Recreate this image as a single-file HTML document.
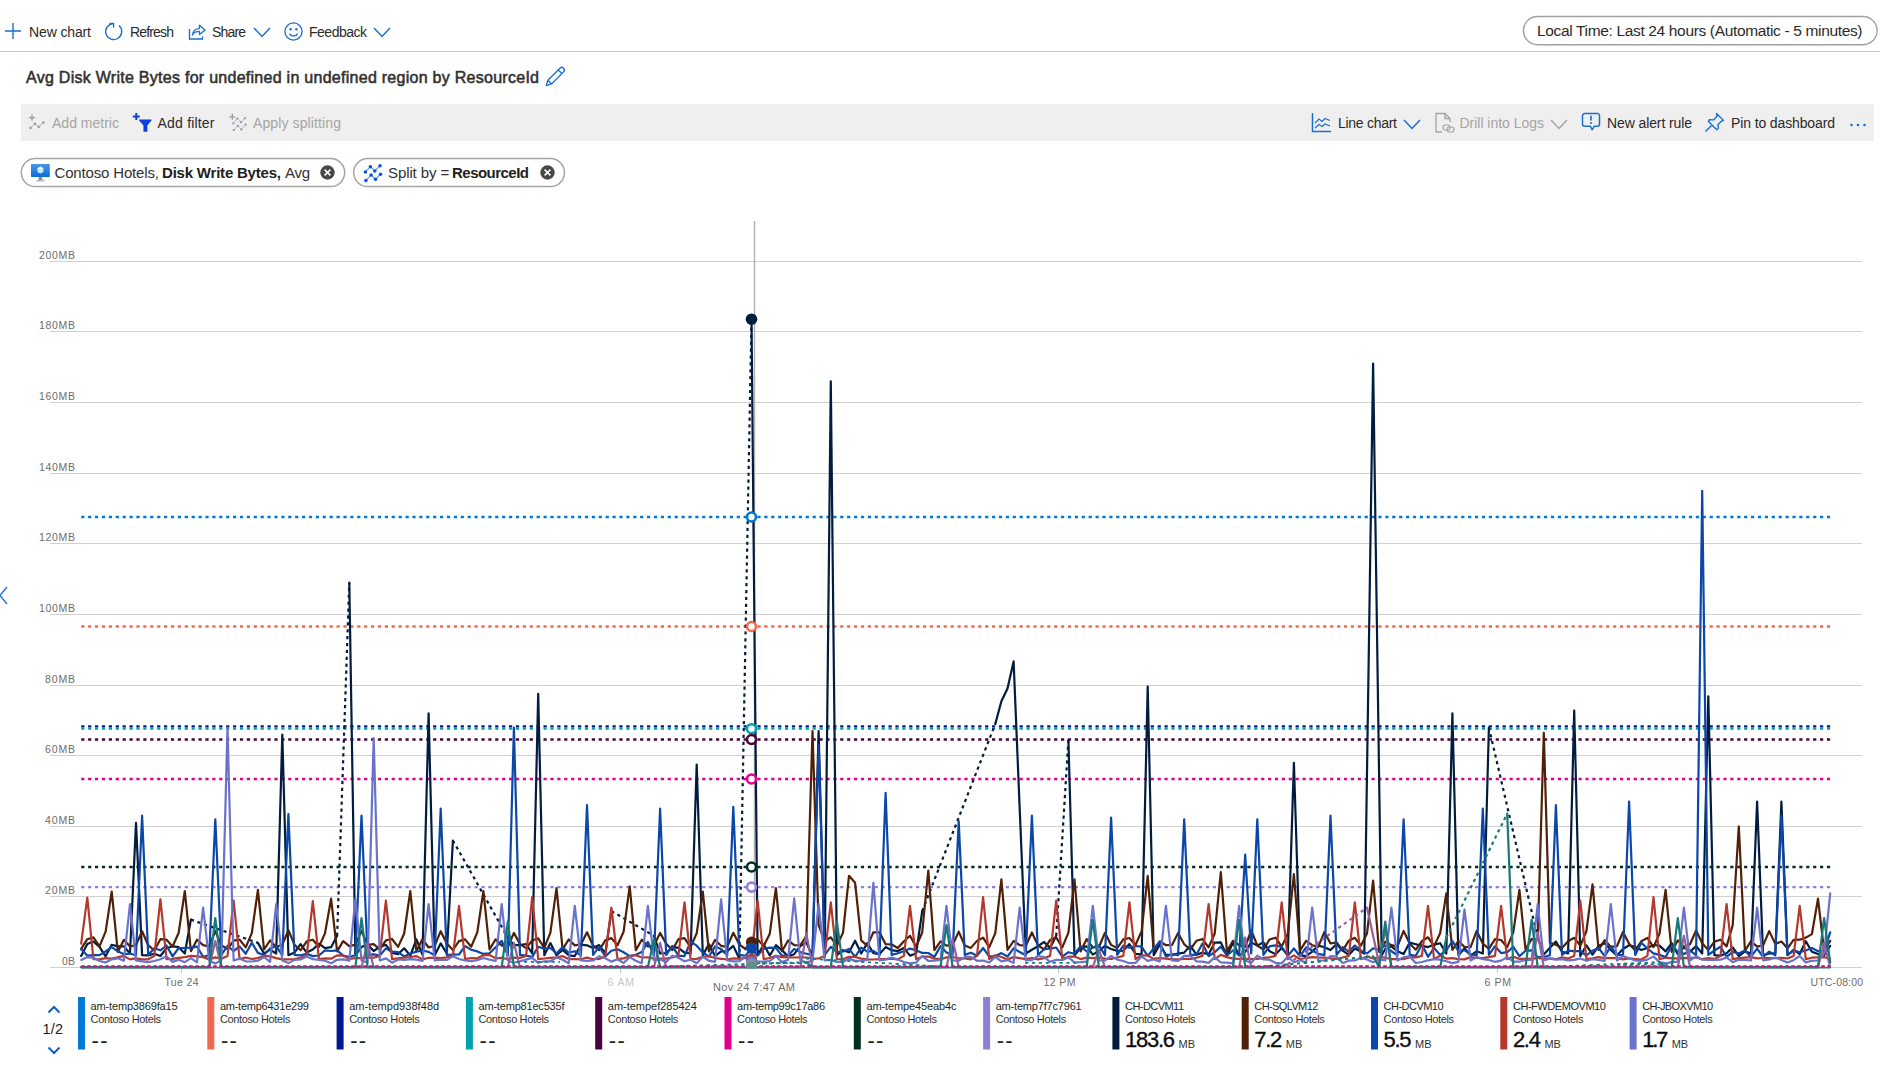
<!DOCTYPE html>
<html lang="en"><head><meta charset="utf-8"><title>Metrics</title>
<style>
html,body{margin:0;padding:0;background:#fff;}
body{width:1880px;height:1079px;position:relative;overflow:hidden;font-family:'Liberation Sans', sans-serif;}
.t{position:absolute;white-space:pre;}
.i{position:absolute;overflow:visible;}
.chart{position:absolute;left:0;top:0;}
.sep{position:absolute;left:0;top:51px;width:1880px;height:1px;background:#c8c6c4;}
.bar{position:absolute;left:21px;top:104px;width:1853px;height:36.5px;background:#efefef;}
.pill{position:absolute;box-sizing:border-box;border:1.3px solid #a3a19e;border-radius:15px;background:#fff;}
</style></head><body>
<div class="sep"></div>
<div class="bar"></div>
<svg class="chart" width="1880" height="200" viewBox="0 0 1880 200">
<rect x="1523.4" y="16.5" width="353.7" height="28.2" rx="14.1" fill="#fff" stroke="#a29fa0" stroke-width="1.4"/>
<rect x="21.3" y="158.6" width="323.4" height="28" rx="14" fill="#fff" stroke="#a6a4a1" stroke-width="1.5"/>
<rect x="353.7" y="158.6" width="210.8" height="28" rx="14" fill="#fff" stroke="#a6a4a1" stroke-width="1.5"/>
</svg>
<svg class="chart" width="1880" height="1079" viewBox="0 0 1880 1079">
<line x1="50" x2="1862" y1="967.5" y2="967.5" stroke="#d2d0ce" stroke-width="1"/>
<line x1="50" x2="1862" y1="896.5" y2="896.5" stroke="#d2d0ce" stroke-width="1"/>
<line x1="50" x2="1862" y1="826.5" y2="826.5" stroke="#d2d0ce" stroke-width="1"/>
<line x1="50" x2="1862" y1="755.5" y2="755.5" stroke="#d2d0ce" stroke-width="1"/>
<line x1="50" x2="1862" y1="685.5" y2="685.5" stroke="#d2d0ce" stroke-width="1"/>
<line x1="50" x2="1862" y1="614.5" y2="614.5" stroke="#d2d0ce" stroke-width="1"/>
<line x1="50" x2="1862" y1="543.5" y2="543.5" stroke="#d2d0ce" stroke-width="1"/>
<line x1="50" x2="1862" y1="473.5" y2="473.5" stroke="#d2d0ce" stroke-width="1"/>
<line x1="50" x2="1862" y1="402.5" y2="402.5" stroke="#d2d0ce" stroke-width="1"/>
<line x1="50" x2="1862" y1="331.5" y2="331.5" stroke="#d2d0ce" stroke-width="1"/>
<line x1="50" x2="1862" y1="261.5" y2="261.5" stroke="#d2d0ce" stroke-width="1"/>
<line x1="181.5" x2="181.5" y1="968" y2="973" stroke="#c8c6c4" stroke-width="1"/>
<line x1="620.5" x2="620.5" y1="968" y2="973" stroke="#c8c6c4" stroke-width="1"/>
<line x1="1058.5" x2="1058.5" y1="968" y2="973" stroke="#c8c6c4" stroke-width="1"/>
<line x1="1497.5" x2="1497.5" y1="968" y2="973" stroke="#c8c6c4" stroke-width="1"/>
<line x1="754.5" x2="754.5" y1="221" y2="968" stroke="#b3b0ad" stroke-width="1.4"/>
<path d="M81.2,517.0 L1830.2,517.0" stroke="#0078d4" stroke-width="2.3" stroke-dasharray="3.2 3.7" fill="none"/>
<path d="M81.2,626.5 L1830.2,626.5" stroke="#ef6950" stroke-width="2.3" stroke-dasharray="3.2 3.7" fill="none"/>
<path d="M81.2,726.4 L1830.2,726.4" stroke="#00188f" stroke-width="2.3" stroke-dasharray="3.2 3.7" fill="none"/>
<path d="M81.2,728.7 L1830.2,728.7" stroke="#00a2ad" stroke-width="2.3" stroke-dasharray="3.2 3.7" fill="none"/>
<path d="M81.2,739.5 L1830.2,739.5" stroke="#4b003f" stroke-width="2.3" stroke-dasharray="3.2 3.7" fill="none"/>
<path d="M81.2,779.0 L1830.2,779.0" stroke="#e3008c" stroke-width="2.3" stroke-dasharray="3.2 3.7" fill="none"/>
<path d="M81.2,867.0 L1830.2,867.0" stroke="#022f22" stroke-width="2.3" stroke-dasharray="3.2 3.7" fill="none"/>
<path d="M81.2,887.1 L1830.2,887.1" stroke="#917edb" stroke-width="2.3" stroke-dasharray="3.2 3.7" fill="none"/>
<path d="M81.2,955.9 L87.3,944.0 L93.4,941.5 L99.5,946.8 L105.6,956.3 L111.7,944.8 L117.8,946.4 L123.9,946.4 L130.0,953.5 L136.0,822.8 L142.1,955.2 L148.2,955.4 L154.3,953.8 L160.4,956.0 L166.5,948.3 L172.6,946.3 L178.7,947.2 L184.8,953.5 L190.9,919.6 M257.9,942.9 L264.0,953.5 L270.1,949.6 L276.2,953.5 L282.3,734.5 L288.4,955.2 L294.5,952.6 L300.6,944.2 L306.7,952.6 L312.8,949.5 L318.9,943.7 L325.0,948.2 L331.1,947.2 L337.1,935.8 M349.3,582.7 L355.4,955.2 L361.5,947.1 L367.6,944.6 L373.7,951.1 L379.8,946.7 L385.9,944.9 L392.0,952.9 L398.1,954.1 L404.2,948.3 L410.3,955.6 L416.4,939.4 L422.5,954.9 L428.6,713.3 L434.7,955.3 L440.7,943.4 L446.8,953.5 L452.9,840.5 M507.8,937.6 L513.9,945.2 L520.0,945.2 L526.1,944.0 L532.2,953.5 L538.2,693.9 L544.3,955.2 L550.4,943.1 L556.5,955.3 L562.6,949.9 L568.7,955.3 L574.8,956.1 L580.9,944.7 L587.0,945.3 L593.1,948.1 L599.2,945.1 L605.3,953.5 L611.4,911.1 M654.0,935.8 L660.1,953.5 L666.2,953.2 L672.3,946.8 L678.4,947.8 L684.5,952.7 L690.6,953.5 L696.7,764.5 L702.8,955.2 L708.9,944.1 L715.0,956.1 L721.1,951.4 L727.2,951.1 L733.3,945.9 L739.4,958.8 M751.5,319.2 L757.6,955.2 L763.7,944.5 L769.8,955.5 L775.9,945.2 L782.0,950.4 L788.1,956.3 L794.2,954.2 L800.3,946.1 L806.4,942.5 L812.5,956.3 L818.6,731.0 L824.7,957.0 L830.8,381.4 L836.9,955.2 L843.0,950.2 L849.0,952.3 L855.1,940.7 L861.2,953.5 L867.3,943.1 L873.4,953.2 L879.5,954.1 L885.6,947.1 L891.7,950.2 L897.8,951.1 L903.9,948.1 L910.0,955.6 L916.1,953.5 L922.2,911.1 M995.3,723.9 L1001.4,701.3 L1007.5,688.6 L1013.6,661.4 L1019.7,808.7 L1025.8,953.5 L1031.9,949.7 L1038.0,946.2 L1044.1,942.0 L1050.1,947.9 L1056.2,935.8 M1068.4,740.2 L1074.5,955.2 L1080.6,947.7 L1086.7,946.4 L1092.8,954.6 L1098.9,951.0 L1105.0,945.9 L1111.1,949.0 L1117.2,950.9 L1123.3,950.7 L1129.4,944.1 L1135.5,953.8 L1141.6,954.4 L1147.7,686.5 L1153.7,955.2 L1159.8,944.8 L1165.9,954.8 L1172.0,954.8 L1178.1,953.7 L1184.2,952.6 L1190.3,945.6 L1196.4,954.7 L1202.5,952.6 L1208.6,954.4 L1214.7,942.6 L1220.8,942.4 L1226.9,955.4 L1233.0,942.8 L1239.1,955.4 L1245.2,951.8 L1251.2,942.4 L1257.3,945.6 L1263.4,942.3 L1269.5,951.1 L1275.6,954.3 L1281.7,948.1 L1287.8,955.3 L1293.9,762.8 L1300.0,955.2 L1306.1,956.1 L1312.2,951.6 L1318.3,945.6 L1324.4,947.2 L1330.5,950.1 L1336.6,943.9 L1342.7,950.7 L1348.8,954.9 L1354.8,948.6 L1360.9,951.5 L1364.3,953.5 L1373.1,363.7 L1381.7,955.2 L1385.3,949.0 L1391.4,946.3 L1397.5,951.3 L1403.6,953.9 L1409.7,942.5 L1415.8,944.2 L1421.9,945.9 L1428.0,947.1 L1434.1,944.6 L1440.2,943.2 L1446.3,953.5 L1452.4,713.3 L1458.4,955.2 L1464.5,948.2 L1470.6,955.4 L1476.7,951.3 L1482.8,953.5 L1488.9,727.5 M1537.7,937.6 L1543.8,954.5 L1549.9,947.8 L1555.9,941.6 L1562.0,951.8 L1568.1,953.5 L1574.2,710.5 L1580.3,956.0 L1586.4,945.3 L1592.5,954.7 L1598.6,945.8 L1604.7,943.2 L1610.8,949.9 L1616.9,955.4 L1623.0,949.0 L1629.1,945.3 L1635.2,946.8 L1641.3,950.0 L1647.4,948.0 L1653.5,945.0 L1659.5,945.6 L1665.6,951.4 L1671.7,943.1 L1677.8,954.1 L1683.9,947.3 L1690.0,951.7 L1696.1,946.1 L1702.2,953.5 L1708.3,696.4 L1714.4,955.2 L1720.5,955.8 L1726.6,953.3 L1732.7,947.4 L1738.8,956.2 L1744.9,951.3 L1751.0,953.5 L1757.1,801.6 L1763.1,955.2 L1769.2,953.4 L1775.3,953.5 L1781.4,801.6 L1787.5,955.2 L1793.6,949.7 L1799.7,954.0 L1805.8,941.2 L1811.9,951.7 L1818.0,954.1 L1824.1,955.1 L1830.2,945.9" stroke="#001d3f" stroke-width="2.2" fill="none" stroke-linejoin="round" stroke-linecap="round"/>
<path d="M190.9,919.6 L257.9,942.9 M337.1,935.8 L349.3,582.7 M452.9,840.5 L507.8,937.6 M611.4,911.1 L654.0,935.8 M739.4,958.8 L751.5,319.2 M922.2,911.1 L995.3,723.9 M1056.2,935.8 L1068.4,740.2 M1488.9,727.5 L1537.7,937.6" stroke="#001d3f" stroke-width="2.2" stroke-dasharray="3.2 3.7" fill="none"/>
<path d="M81.2,948.9 L87.3,939.2 L93.4,937.4 L99.5,946.3 L105.6,931.7 L111.7,891.7 L117.8,951.9 L123.9,939.8 L130.0,946.5 L136.0,945.0 L142.1,931.2 L148.2,945.2 L154.3,950.5 L160.4,939.2 L166.5,939.7 L172.6,946.5 L178.7,932.7 L184.8,891.0 L190.9,951.2 L197.0,939.7 L203.1,945.1 L209.2,946.4 L215.3,931.1 L221.4,945.2 L227.5,949.1 L233.6,940.7 L239.6,939.6 L245.7,947.4 L251.8,933.1 L257.9,889.9 L264.0,949.5 L270.1,940.4 L276.2,947.2 L282.3,944.6 L288.4,930.2 L294.5,944.8 L300.6,950.3 L306.7,941.3 L312.8,939.8 L318.9,946.9 L325.0,933.4 L331.1,898.7 L337.1,951.4 L343.2,941.1 L349.3,946.2 L355.4,944.6 L361.5,930.9 L367.6,944.9 L373.7,944.2 L379.8,949.5 L385.9,940.3 L392.0,939.0 L398.1,946.9 L404.2,933.5 L410.3,891.0 L416.4,951.3 L422.5,939.1 L428.6,947.5 L434.7,945.7 L440.7,931.2 L446.8,943.6 L452.9,950.0 L459.0,941.1 L465.1,939.4 L471.2,946.7 L477.3,932.4 L483.4,891.0 L489.5,949.4 L495.6,939.4 L501.7,945.4 L507.8,947.1 L513.9,932.9 L520.0,944.1 L526.1,948.1 L532.2,940.5 L538.2,938.4 L544.3,947.8 L550.4,932.6 L556.5,888.1 L562.6,949.4 L568.7,939.5 L574.8,945.4 L580.9,944.4 L587.0,932.3 L593.1,945.7 L599.2,950.2 L605.3,940.3 L611.4,938.1 L617.5,945.2 L623.6,931.7 L629.7,886.4 L635.8,950.2 L641.8,939.7 L647.9,946.5 L654.0,945.6 L660.1,932.9 L666.2,943.8 L672.3,950.0 L678.4,939.2 L684.5,938.2 L690.6,947.0 L696.7,933.3 L702.8,891.7 L708.9,951.4 L715.0,940.0 L721.1,945.8 L727.2,946.8 L733.3,932.8 L739.4,944.6 L745.4,949.0 L751.5,940.7 L757.6,939.4 L763.7,946.1 L769.8,933.7 L775.9,888.1 L782.0,951.2 L788.1,940.5 L794.2,945.1 L800.3,945.3 L806.4,935.8 L812.5,731.0 L818.6,925.2 L824.7,941.1 L830.8,937.3 L836.9,945.8 L843.0,932.8 L849.0,875.8 L855.1,882.8 L861.2,940.4 L867.3,945.9 L873.4,932.3 L879.5,932.3 L885.6,944.2 L891.7,944.5 L897.8,948.0 L903.9,941.2 L910.0,935.8 L916.1,946.9 L922.2,932.5 L928.3,870.5 L934.4,950.1 L940.5,941.3 L946.5,945.6 L952.6,945.0 L958.7,931.6 L964.8,945.5 L970.9,947.9 L977.0,940.9 L983.1,937.7 L989.2,947.2 L995.3,933.1 L1001.4,879.3 L1007.5,949.9 L1013.6,941.0 L1019.7,945.1 L1025.8,945.7 L1031.9,932.5 L1038.0,945.4 L1044.1,949.5 L1050.1,939.9 L1056.2,937.4 L1062.3,947.4 L1068.4,932.6 L1074.5,879.3 L1080.6,951.5 L1086.7,939.1 L1092.8,947.4 L1098.9,947.0 L1105.0,932.8 L1111.1,944.9 L1117.2,948.1 L1123.3,939.3 L1129.4,938.0 L1135.5,945.0 L1141.6,931.1 L1147.7,875.8 L1153.7,951.1 L1159.8,941.3 L1165.9,945.2 L1172.0,945.0 L1178.1,932.9 L1184.2,944.2 L1190.3,949.6 L1196.4,940.8 L1202.5,939.1 L1208.6,947.3 L1214.7,933.7 L1220.8,872.2 L1226.9,951.3 L1233.0,940.8 L1239.1,945.1 L1245.2,946.8 L1251.2,930.3 L1257.3,945.5 L1263.4,949.6 L1269.5,939.5 L1275.6,937.7 L1281.7,946.6 L1287.8,933.6 L1293.9,874.0 L1300.0,950.7 L1306.1,940.8 L1312.2,945.2 L1318.3,946.6 L1324.4,932.0 L1330.5,943.5 L1336.6,942.3 L1342.7,950.6 L1348.8,940.7 L1354.8,937.8 L1360.9,945.7 L1367.0,933.6 L1373.1,880.7 L1379.2,952.0 L1385.3,941.6 L1391.4,945.2 L1397.5,946.4 L1403.6,930.9 L1409.7,943.5 L1415.8,949.7 L1421.9,941.1 L1428.0,937.3 L1434.1,946.1 L1440.2,933.0 L1446.3,893.4 L1452.4,950.0 L1458.4,940.9 L1464.5,947.0 L1470.6,947.1 L1476.7,930.9 L1482.8,943.5 L1488.9,948.9 L1495.0,939.2 L1501.1,940.0 L1507.2,947.2 L1513.3,932.4 L1519.4,889.9 L1525.5,949.4 L1531.6,939.1 L1537.7,939.3 L1543.8,732.8 L1549.9,942.9 L1555.9,944.7 L1562.0,948.0 L1568.1,941.3 L1574.2,937.8 L1580.3,945.7 L1586.4,931.4 L1592.5,884.3 L1598.6,949.9 L1604.7,940.1 L1610.8,946.9 L1616.9,946.2 L1623.0,932.0 L1629.1,943.8 L1635.2,950.4 L1641.3,941.3 L1647.4,937.9 L1653.5,947.1 L1659.5,933.5 L1665.6,889.9 L1671.7,952.0 L1677.8,940.3 L1683.9,946.9 L1690.0,944.3 L1696.1,930.5 L1702.2,943.3 L1708.3,949.9 L1714.4,941.6 L1720.5,939.8 L1726.6,946.4 L1732.7,925.2 L1738.8,826.3 L1744.9,950.8 L1751.0,941.2 L1757.1,946.6 L1763.1,945.4 L1769.2,931.1 L1775.3,943.9 L1781.4,941.5 L1787.5,948.3 L1793.6,939.9 L1799.7,939.7 L1805.8,937.6 L1811.9,934.1 L1818.0,898.7 L1824.1,950.5 L1830.2,940.8" stroke="#502006" stroke-width="2.2" fill="none" stroke-linejoin="round" stroke-linecap="round"/>
<path d="M81.2,949.2 L87.3,955.6 L93.4,955.1 L99.5,955.1 L105.6,951.4 L111.7,947.1 L117.8,951.3 L123.9,954.3 L130.0,953.5 L136.0,955.2 L142.1,815.7 L148.2,954.9 L154.3,948.2 L160.4,950.3 L166.5,945.5 L172.6,956.4 L178.7,948.0 L184.8,948.0 L190.9,947.7 L197.0,946.6 L203.1,956.8 L209.2,955.2 L215.3,819.3 L221.4,954.9 L227.5,945.8 L233.6,951.2 L239.6,946.4 L245.7,953.8 L251.8,942.7 L257.9,952.9 L264.0,955.0 L270.1,948.6 L276.2,946.2 L282.3,955.2 L288.4,814.0 L294.5,954.9 L300.6,955.4 L306.7,953.8 L312.8,956.1 L318.9,955.5 L325.0,950.4 L331.1,951.0 L337.1,950.3 L343.2,955.5 L349.3,957.0 L355.4,955.2 L361.5,815.7 L367.6,954.9 L373.7,954.4 L379.8,955.5 L385.9,948.4 L392.0,951.7 L398.1,952.1 L404.2,956.4 L410.3,953.5 L416.4,951.6 L422.5,950.5 L428.6,951.9 L434.7,955.2 L440.7,808.7 L446.8,954.9 L452.9,954.7 L459.0,954.5 L465.1,946.1 L471.2,949.8 L477.3,951.4 L483.4,953.9 L489.5,953.3 L495.6,947.4 L501.7,940.8 L507.8,955.2 L513.9,727.5 L520.0,954.9 L526.1,955.5 L532.2,957.0 L538.2,946.8 L544.3,948.6 L550.4,948.0 L556.5,953.4 L562.6,947.1 L568.7,952.7 L574.8,951.3 L580.9,955.2 L587.0,805.2 L593.1,954.9 L599.2,946.7 L605.3,956.5 L611.4,950.7 L617.5,949.2 L623.6,952.2 L629.7,956.1 L635.8,954.7 L641.8,952.0 L647.9,941.9 L654.0,955.2 L660.1,808.7 L666.2,954.9 L672.3,945.9 L678.4,955.6 L684.5,956.2 L690.6,941.6 L696.7,945.7 L702.8,952.5 L708.9,956.7 L715.0,946.5 L721.1,949.0 L727.2,955.2 L733.3,806.9 L739.4,954.9 L745.4,955.9 L751.5,948.5 L757.6,955.4 L763.7,948.8 L769.8,947.6 L775.9,947.9 L782.0,955.7 L788.1,955.4 L794.2,948.9 L800.3,952.1 L806.4,953.7 L812.5,955.2 L818.6,745.1 L824.7,954.9 L830.8,946.9 L836.9,952.2 L843.0,951.5 L849.0,948.9 L855.1,956.8 L861.2,947.7 L867.3,951.7 L873.4,951.0 L879.5,955.2 L885.6,792.8 L891.7,954.9 L897.8,953.2 L903.9,951.2 L910.0,948.6 L916.1,950.2 L922.2,952.9 L928.3,953.0 L934.4,956.9 L940.5,946.2 L946.5,952.4 L952.6,955.2 L958.7,821.0 L964.8,954.9 L970.9,952.8 L977.0,955.8 L983.1,948.0 L989.2,956.4 L995.3,956.2 L1001.4,953.1 L1007.5,956.5 L1013.6,948.4 L1019.7,952.1 L1025.8,955.2 L1031.9,815.7 L1038.0,954.9 L1044.1,949.2 L1050.1,948.6 L1056.2,947.5 L1062.3,956.7 L1068.4,952.2 L1074.5,953.7 L1080.6,946.1 L1086.7,951.5 L1092.8,947.5 L1098.9,945.4 L1105.0,955.2 L1111.1,817.5 L1117.2,954.9 L1123.3,945.6 L1129.4,947.8 L1135.5,946.0 L1141.6,946.6 L1147.7,955.9 L1153.7,948.5 L1159.8,941.8 L1165.9,956.7 L1172.0,954.0 L1178.1,955.2 L1184.2,819.3 L1190.3,954.9 L1196.4,954.8 L1202.5,943.5 L1208.6,956.1 L1214.7,952.2 L1220.8,946.6 L1226.9,955.5 L1233.0,950.4 L1239.1,955.2 L1245.2,854.6 L1251.2,953.5 L1257.3,819.3 L1263.4,954.9 L1269.5,946.3 L1275.6,945.4 L1281.7,946.9 L1287.8,955.9 L1293.9,948.5 L1300.0,956.3 L1306.1,947.3 L1312.2,950.5 L1318.3,953.9 L1324.4,955.2 L1330.5,815.7 L1336.6,954.9 L1342.7,947.1 L1348.8,951.8 L1354.8,945.5 L1360.9,950.6 L1367.0,953.5 L1373.1,948.3 L1379.2,950.3 L1385.3,945.5 L1391.4,951.3 L1397.5,955.2 L1403.6,819.3 L1409.7,954.9 L1415.8,955.8 L1421.9,944.5 L1428.0,956.8 L1434.1,948.0 L1440.2,955.0 L1446.3,950.5 L1452.4,941.0 L1458.4,951.2 L1464.5,950.2 L1470.6,954.4 L1476.7,955.2 L1482.8,808.7 L1488.9,954.9 L1495.0,946.2 L1501.1,953.1 L1507.2,952.1 L1513.3,946.9 L1519.4,956.2 L1525.5,950.7 L1531.6,950.3 L1537.7,956.9 L1543.8,957.0 L1549.9,955.2 L1555.9,805.2 L1562.0,954.9 L1568.1,950.7 L1574.2,951.2 L1580.3,951.1 L1586.4,955.5 L1592.5,950.7 L1598.6,948.0 L1604.7,956.1 L1610.8,946.3 L1616.9,955.1 L1623.0,955.2 L1629.1,801.6 L1635.2,954.9 L1641.3,942.7 L1647.4,948.5 L1653.5,953.4 L1659.5,954.9 L1665.6,957.0 L1671.7,945.8 L1677.8,951.5 L1683.9,954.0 L1690.0,950.4 L1696.1,955.2 L1702.2,490.8 L1708.3,954.9 L1714.4,950.5 L1720.5,946.8 L1726.6,956.8 L1732.7,951.9 L1738.8,953.4 L1744.9,950.6 L1751.0,956.7 L1757.1,948.6 L1763.1,957.0 L1769.2,951.6 L1775.3,955.2 L1781.4,815.7 L1787.5,954.9 L1793.6,950.9 L1799.7,952.2 L1805.8,950.5 L1811.9,948.1 L1818.0,951.2 L1824.1,951.7 L1830.2,932.3" stroke="#0b47a8" stroke-width="2.2" fill="none" stroke-linejoin="round" stroke-linecap="round"/>
<path d="M81.2,943.6 L87.3,897.7 L93.4,959.1 L99.5,959.3 L105.6,958.2 L111.7,958.6 L117.8,957.2 L123.9,956.1 L130.0,959.4 L136.0,958.4 L142.1,959.3 L148.2,959.3 L154.3,955.9 L160.4,899.4 L166.5,959.1 L172.6,958.9 L178.7,957.9 L184.8,957.1 L190.9,955.9 L197.0,956.4 L203.1,957.1 L209.2,959.4 L215.3,957.4 L221.4,958.8 L227.5,955.9 L233.6,900.5 L239.6,959.1 L245.7,957.5 L251.8,959.0 L257.9,958.0 L264.0,955.8 L270.1,956.4 L276.2,958.1 L282.3,959.3 L288.4,959.3 L294.5,959.0 L300.6,957.8 L306.7,955.9 L312.8,901.2 L318.9,959.1 L325.0,958.4 L331.1,958.7 L337.1,955.4 L343.2,955.6 L349.3,958.9 L355.4,958.1 L361.5,958.2 L367.6,957.3 L373.7,957.7 L379.8,955.9 L385.9,900.5 L392.0,959.1 L398.1,958.4 L404.2,957.6 L410.3,957.0 L416.4,956.1 L422.5,959.4 L428.6,957.8 L434.7,957.6 L440.7,958.1 L446.8,957.3 L452.9,955.9 L459.0,905.8 L465.1,959.1 L471.2,958.0 L477.3,958.3 L483.4,955.3 L489.5,955.0 L495.6,958.3 L501.7,957.8 L507.8,959.3 L513.9,957.7 L520.0,957.9 L526.1,955.9 L532.2,897.0 L538.2,959.1 L544.3,958.5 L550.4,957.8 L556.5,957.3 L562.6,956.2 L568.7,959.1 L574.8,959.2 L580.9,959.3 L587.0,957.6 L593.1,959.2 L599.2,958.9 L605.3,955.9 L611.4,907.6 L617.5,959.1 L623.6,958.4 L629.7,956.0 L635.8,955.2 L641.8,957.5 L647.9,957.3 L654.0,958.8 L660.1,958.5 L666.2,958.6 L672.3,957.3 L678.4,955.9 L684.5,902.3 L690.6,959.1 L696.7,958.9 L702.8,956.8 L708.9,956.2 L715.0,958.0 L721.1,958.8 L727.2,959.5 L733.3,958.4 L739.4,958.6 L745.4,958.1 L751.5,955.9 L757.6,900.5 L763.7,959.1 L769.8,958.0 L775.9,955.7 L782.0,957.2 L788.1,957.3 L794.2,957.5 L800.3,957.3 L806.4,957.5 L812.5,958.5 L818.6,958.5 L824.7,955.9 L830.8,902.3 L836.9,959.1 L843.0,959.3 L849.0,956.8 L855.1,957.0 L861.2,958.6 L867.3,959.3 L873.4,959.5 L879.5,959.1 L885.6,959.2 L891.7,958.6 L897.8,959.4 L903.9,955.9 L910.0,905.8 L916.1,959.1 L922.2,956.7 L928.3,956.5 L934.4,958.6 L940.5,959.2 L946.5,957.4 L952.6,957.0 L958.7,958.3 L964.8,958.3 L970.9,959.3 L977.0,955.9 L983.1,897.0 L989.2,959.1 L995.3,955.3 L1001.4,957.0 L1007.5,959.4 L1013.6,957.1 L1019.7,958.2 L1025.8,959.1 L1031.9,958.1 L1038.0,959.4 L1044.1,958.2 L1050.1,955.9 L1056.2,900.5 L1062.3,959.1 L1068.4,956.7 L1074.5,956.5 L1080.6,959.1 L1086.7,957.6 L1092.8,958.2 L1098.9,957.6 L1105.0,958.7 L1111.1,958.9 L1117.2,957.5 L1123.3,955.9 L1129.4,902.3 L1135.5,959.1 L1141.6,955.3 L1147.7,955.5 L1153.7,958.9 L1159.8,958.2 L1165.9,958.6 L1172.0,959.4 L1178.1,959.4 L1184.2,958.8 L1190.3,958.8 L1196.4,957.8 L1202.5,955.9 L1208.6,904.0 L1214.7,959.1 L1220.8,954.9 L1226.9,957.1 L1233.0,958.6 L1239.1,958.9 L1245.2,958.9 L1251.2,959.0 L1257.3,959.0 L1263.4,957.9 L1269.5,957.3 L1275.6,955.9 L1281.7,902.3 L1287.8,959.1 L1293.9,955.4 L1300.0,959.3 L1306.1,957.8 L1312.2,957.2 L1318.3,957.5 L1324.4,957.6 L1330.5,958.3 L1336.6,959.0 L1342.7,957.5 L1348.8,955.9 L1354.8,902.3 L1360.9,959.1 L1367.0,956.4 L1373.1,958.5 L1379.2,957.1 L1385.3,957.7 L1391.4,959.1 L1397.5,959.2 L1403.6,959.1 L1409.7,957.2 L1415.8,957.5 L1421.9,955.9 L1428.0,905.8 L1434.1,959.1 L1440.2,955.7 L1446.3,958.6 L1452.4,958.1 L1458.4,959.2 L1464.5,959.4 L1470.6,957.1 L1476.7,957.9 L1482.8,958.2 L1488.9,957.2 L1495.0,955.9 L1501.1,905.8 L1507.2,959.1 L1513.3,956.8 L1519.4,958.9 L1525.5,958.8 L1531.6,958.9 L1537.7,958.0 L1543.8,958.8 L1549.9,958.4 L1555.9,959.2 L1562.0,957.2 L1568.1,958.6 L1574.2,955.9 L1580.3,900.5 L1586.4,959.1 L1592.5,958.4 L1598.6,957.2 L1604.7,958.2 L1610.8,958.2 L1616.9,958.2 L1623.0,959.4 L1629.1,958.4 L1635.2,959.0 L1641.3,959.5 L1647.4,955.9 L1653.5,897.0 L1659.5,959.1 L1665.6,957.7 L1671.7,958.1 L1677.8,958.7 L1683.9,958.2 L1690.0,958.1 L1696.1,957.5 L1702.2,959.2 L1708.3,958.1 L1714.4,958.9 L1720.5,955.9 L1726.6,904.0 L1732.7,959.1 L1738.8,958.1 L1744.9,957.6 L1751.0,957.2 L1757.1,958.4 L1763.1,958.0 L1769.2,958.2 L1775.3,958.2 L1781.4,957.8 L1787.5,958.4 L1793.6,955.9 L1799.7,905.8 L1805.8,959.1 L1811.9,957.7 L1818.0,957.3 L1824.1,957.1 L1830.2,958.8" stroke="#b4382c" stroke-width="2.2" fill="none" stroke-linejoin="round" stroke-linecap="round"/>
<path d="M81.2,959.9 L87.3,957.1 L93.4,957.8 L99.5,961.0 L105.6,962.4 L111.7,959.3 L117.8,958.3 L123.9,960.7 L130.0,904.0 L136.0,960.5 L142.1,961.4 L148.2,962.1 L154.3,961.0 L160.4,959.3 L166.5,956.3 L172.6,961.9 L178.7,959.8 L184.8,962.2 L190.9,958.2 L197.0,962.3 L203.1,907.6 L209.2,960.5 L215.3,963.4 L221.4,960.3 L227.5,727.5 L233.6,960.5 L239.6,958.6 L245.7,961.3 L251.8,961.5 L257.9,960.7 L264.0,957.0 L270.1,961.8 L276.2,904.0 L282.3,960.5 L288.4,963.1 L294.5,959.9 L300.6,959.5 L306.7,956.5 L312.8,959.2 L318.9,959.8 L325.0,960.7 L331.1,963.3 L337.1,959.8 L343.2,959.3 L349.3,960.6 L355.4,898.7 L361.5,960.5 L367.6,962.8 L373.7,738.1 L379.8,960.5 L385.9,958.4 L392.0,962.7 L398.1,959.5 L404.2,960.0 L410.3,959.1 L416.4,959.6 L422.5,960.8 L428.6,904.0 L434.7,960.5 L440.7,959.6 L446.8,960.0 L452.9,956.3 L459.0,959.0 L465.1,960.4 L471.2,961.1 L477.3,960.2 L483.4,958.0 L489.5,959.6 L495.6,961.0 L501.7,904.0 L507.8,960.5 L513.9,962.8 L520.0,961.3 L526.1,959.6 L532.2,957.9 L538.2,962.8 L544.3,961.3 L550.4,961.3 L556.5,957.5 L562.6,959.7 L568.7,963.3 L574.8,905.8 L580.9,960.5 L587.0,961.0 L593.1,960.5 L599.2,956.3 L605.3,958.2 L611.4,961.6 L617.5,959.3 L623.6,963.0 L629.7,957.1 L635.8,960.7 L641.8,963.2 L647.9,905.8 L654.0,960.5 L660.1,959.4 L666.2,962.0 L672.3,955.7 L678.4,957.7 L684.5,961.3 L690.6,959.6 L696.7,963.2 L702.8,956.8 L708.9,960.7 L715.0,961.9 L721.1,899.4 L727.2,960.5 L733.3,961.4 L739.4,961.1 L745.4,956.6 L751.5,958.9 L757.6,961.5 L763.7,961.6 L769.8,961.0 L775.9,956.3 L782.0,962.1 L788.1,959.9 L794.2,898.4 L800.3,960.5 L806.4,962.2 L812.5,961.2 L818.6,904.0 L824.7,960.5 L830.8,960.0 L836.9,962.0 L843.0,962.0 L849.0,958.6 L855.1,960.9 L861.2,960.7 L867.3,960.0 L873.4,882.8 L879.5,960.5 L885.6,959.6 L891.7,957.5 L897.8,959.6 L903.9,962.1 L910.0,963.3 L916.1,962.6 L922.2,955.9 L928.3,960.8 L934.4,960.6 L940.5,960.0 L946.5,905.8 L952.6,960.5 L958.7,960.7 L964.8,957.2 L970.9,956.9 L977.0,960.8 L983.1,960.5 L989.2,962.5 L995.3,957.0 L1001.4,961.4 L1007.5,960.1 L1013.6,962.9 L1019.7,907.6 L1025.8,960.5 L1031.9,960.1 L1038.0,956.0 L1044.1,957.1 L1050.1,961.8 L1056.2,959.9 L1062.3,960.0 L1068.4,957.4 L1074.5,962.3 L1080.6,962.1 L1086.7,961.6 L1092.8,905.8 L1098.9,960.5 L1105.0,960.6 L1111.1,955.9 L1117.2,959.6 L1123.3,961.0 L1129.4,963.2 L1135.5,962.9 L1141.6,956.4 L1147.7,960.9 L1153.7,959.5 L1159.8,961.5 L1165.9,905.8 L1172.0,960.5 L1178.1,960.9 L1184.2,955.9 L1190.3,955.7 L1196.4,961.3 L1202.5,961.6 L1208.6,962.9 L1214.7,957.1 L1220.8,962.5 L1226.9,962.7 L1233.0,963.3 L1239.1,905.8 L1245.2,960.5 L1251.2,962.8 L1257.3,955.7 L1263.4,959.5 L1269.5,959.7 L1275.6,962.8 L1281.7,963.3 L1287.8,956.8 L1293.9,962.3 L1300.0,960.3 L1306.1,962.6 L1312.2,907.6 L1318.3,960.5 L1324.4,960.3 L1330.5,956.2 L1336.6,956.7 L1342.7,963.0 L1348.8,960.7 L1354.8,960.4 L1360.9,957.9 L1367.0,959.4 L1373.1,962.3 L1379.2,959.3 L1385.3,960.3 L1391.4,907.6 L1397.5,960.5 L1403.6,957.1 L1409.7,956.4 L1415.8,963.0 L1421.9,962.0 L1428.0,960.3 L1434.1,959.1 L1440.2,959.7 L1446.3,961.3 L1452.4,963.1 L1458.4,961.8 L1464.5,909.3 L1470.6,960.5 L1476.7,957.0 L1482.8,959.2 L1488.9,960.0 L1495.0,961.8 L1501.1,960.6 L1507.2,957.2 L1513.3,961.6 L1519.4,961.7 L1525.5,960.0 L1531.6,959.8 L1537.7,904.0 L1543.8,960.5 L1549.9,958.6 L1555.9,959.6 L1562.0,959.2 L1568.1,960.4 L1574.2,959.9 L1580.3,958.4 L1586.4,960.8 L1592.5,959.2 L1598.6,959.8 L1604.7,960.8 L1610.8,904.0 L1616.9,960.5 L1623.0,956.1 L1629.1,958.2 L1635.2,960.5 L1641.3,960.8 L1647.4,959.6 L1653.5,956.4 L1659.5,962.2 L1665.6,963.4 L1671.7,962.2 L1677.8,961.6 L1683.9,907.6 L1690.0,960.5 L1696.1,956.1 L1702.2,959.7 L1708.3,959.8 L1714.4,959.9 L1720.5,959.7 L1726.6,957.4 L1732.7,962.2 L1738.8,959.8 L1744.9,959.9 L1751.0,960.5 L1757.1,907.6 L1763.1,960.5 L1769.2,959.5 L1775.3,957.5 L1781.4,960.0 L1787.5,962.5 L1793.6,960.2 L1799.7,955.9 L1805.8,962.4 L1811.9,960.8 L1818.0,960.5 L1824.1,953.5 L1830.2,893.4" stroke="#6a72cc" stroke-width="2.2" fill="none" stroke-linejoin="round" stroke-linecap="round"/>
<path d="M81.2,967.2 L87.3,967.2 L93.4,967.2 L99.5,967.2 L105.6,967.2 L111.7,967.2 L117.8,967.2 L123.9,967.2 L130.0,967.2 L136.0,967.2 L142.1,967.2 L148.2,967.2 L154.3,967.2 L160.4,967.2 L166.5,967.2 L172.6,967.2 L178.7,967.2 L184.8,967.2 L190.9,967.2 L197.0,967.2 L203.1,967.2 L209.2,967.2 L215.3,941.1 L221.4,967.2 L227.5,967.2 L233.6,967.2 L239.6,967.2 L245.7,967.2 L251.8,967.2 L257.9,967.2 L264.0,967.2 L270.1,967.2 L276.2,967.2 L282.3,967.2 L288.4,967.2 L294.5,967.2 L300.6,967.2 L306.7,967.2 L312.8,967.2 L318.9,967.2 L325.0,967.2 L331.1,967.2 L337.1,967.2 L343.2,967.2 L349.3,967.2 L355.4,967.2 L361.5,967.2 L367.6,942.9 L373.7,967.2 L379.8,967.2 L385.9,967.2 L392.0,967.2 L398.1,967.2 L404.2,967.2 L410.3,967.2 L416.4,967.2 L422.5,967.2 L428.6,967.2 L434.7,967.2 L440.7,967.2 L446.8,967.2 L452.9,967.2 L459.0,967.2 L465.1,967.2 L471.2,967.2 L477.3,967.2 L483.4,967.2 L489.5,967.2 L495.6,967.2 L501.7,967.2 L507.8,967.2 L513.9,942.9 L520.0,967.2 L526.1,967.2 L532.2,967.2 L538.2,967.2 L544.3,967.2 L550.4,967.2 L556.5,967.2 L562.6,967.2 L568.7,967.2 L574.8,967.2 L580.9,967.2 L587.0,967.2 L593.1,967.2 L599.2,967.2 L605.3,967.2 L611.4,967.2 L617.5,967.2 L623.6,967.2 L629.7,967.2 L635.8,967.2 L641.8,967.2 L647.9,967.2 L654.0,967.2 L660.1,942.9 L666.2,967.2 L672.3,967.2 L678.4,967.2 L684.5,967.2 L690.6,967.2 L696.7,967.2 L702.8,967.2 L708.9,967.2 L715.0,967.2 L721.1,967.2 L727.2,967.2 L733.3,967.2 L739.4,967.2 L745.4,967.2 L751.5,967.2 L757.6,967.2 L763.7,967.2 L769.8,967.2 L775.9,967.2 L782.0,967.2 L788.1,967.2 L794.2,967.2 L800.3,967.2 L806.4,933.7 L812.5,967.2 L818.6,967.2 L824.7,967.2 L830.8,967.2 L836.9,967.2 L843.0,967.2 L849.0,967.2 L855.1,967.2 L861.2,967.2 L867.3,967.2 L873.4,967.2 L879.5,967.2 L885.6,967.2 L891.7,967.2 L897.8,967.2 L903.9,967.2 L910.0,967.2 L916.1,967.2 L922.2,967.2 L928.3,967.2 L934.4,967.2 L940.5,967.2 L946.5,967.2 L952.6,939.3 L958.7,967.2 L964.8,967.2 L970.9,967.2 L977.0,967.2 L983.1,967.2 L989.2,967.2 L995.3,967.2 L1001.4,967.2 L1007.5,967.2 L1013.6,967.2 L1019.7,967.2 L1025.8,967.2 L1031.9,967.2 L1038.0,967.2 L1044.1,967.2 L1050.1,967.2 L1056.2,967.2 L1062.3,967.2 L1068.4,967.2 L1074.5,967.2 L1080.6,967.2 L1086.7,967.2 L1092.8,967.2 L1098.9,949.9 L1105.0,967.2 L1111.1,967.2 L1117.2,967.2 L1123.3,967.2 L1129.4,967.2 L1135.5,967.2 L1141.6,967.2 L1147.7,967.2 L1153.7,967.2 L1159.8,967.2 L1165.9,967.2 L1172.0,967.2 L1178.1,967.2 L1184.2,967.2 L1190.3,967.2 L1196.4,967.2 L1202.5,967.2 L1208.6,967.2 L1214.7,967.2 L1220.8,967.2 L1226.9,967.2 L1233.0,967.2 L1239.1,967.2 L1245.2,937.6 L1251.2,967.2 L1257.3,967.2 L1263.4,967.2 L1269.5,967.2 L1275.6,967.2 L1281.7,967.2 L1287.8,964.1 M1367.0,907.6 L1373.1,935.8 L1379.2,964.1 L1385.3,928.8 L1391.4,967.2 L1397.5,967.2 L1403.6,967.2 L1409.7,967.2 L1415.8,967.2 L1421.9,967.2 L1428.0,967.2 L1434.1,967.2 L1440.2,967.2 L1446.3,967.2 L1452.4,967.2 L1458.4,967.2 L1464.5,967.2 L1470.6,967.2 L1476.7,967.2 L1482.8,967.2 L1488.9,967.2 L1495.0,967.2 L1501.1,967.2 L1507.2,967.2 L1513.3,967.2 L1519.4,967.2 L1525.5,967.2 L1531.6,967.2 L1537.7,932.3 L1543.8,967.2 L1549.9,967.2 L1555.9,967.2 L1562.0,967.2 L1568.1,967.2 L1574.2,967.2 L1580.3,967.2 L1586.4,967.2 L1592.5,967.2 L1598.6,967.2 L1604.7,967.2 L1610.8,967.2 L1616.9,967.2 L1623.0,967.2 L1629.1,967.2 L1635.2,967.2 L1641.3,967.2 L1647.4,967.2 L1653.5,967.2 L1659.5,967.2 L1665.6,967.2 L1671.7,967.2 L1677.8,967.2 L1683.9,935.8 L1690.0,967.2 L1696.1,967.2 L1702.2,967.2 L1708.3,967.2 L1714.4,967.2 L1720.5,967.2 L1726.6,967.2 L1732.7,967.2 L1738.8,967.2 L1744.9,967.2 L1751.0,967.2 L1757.1,967.2 L1763.1,967.2 L1769.2,967.2 L1775.3,967.2 L1781.4,967.2 L1787.5,967.2 L1793.6,967.2 L1799.7,967.2 L1805.8,967.2 L1811.9,967.2 L1818.0,967.2 L1824.1,942.9 L1830.2,967.2" stroke="#96609c" stroke-width="2.2" fill="none" stroke-linejoin="round" stroke-linecap="round"/>
<path d="M1287.8,964.1 L1367.0,907.6" stroke="#96609c" stroke-width="2.2" stroke-dasharray="3.2 3.7" fill="none"/>
<path d="M81.2,967.1 L87.3,967.1 L93.4,967.1 L99.5,967.1 L105.6,967.1 L111.7,967.1 L117.8,967.1 L123.9,967.1 L130.0,967.1 L136.0,967.1 L142.1,967.1 L148.2,967.1 L154.3,967.1 L160.4,967.1 L166.5,967.1 L172.6,967.1 L178.7,967.1 L184.8,967.1 L190.9,967.1 L197.0,967.1 L203.1,967.1 L209.2,967.1 L215.3,918.2 L221.4,967.1 L227.5,967.1 L233.6,967.1 L239.6,967.1 L245.7,967.1 L251.8,967.1 L257.9,967.1 L264.0,967.1 L270.1,967.1 L276.2,967.1 L282.3,967.1 L288.4,967.1 L294.5,967.1 L300.6,967.1 L306.7,967.1 L312.8,967.1 L318.9,967.1 L325.0,967.1 L331.1,967.1 L337.1,967.1 L343.2,967.1 L349.3,967.1 L355.4,967.1 L361.5,918.2 L367.6,967.1 L373.7,967.1 L379.8,967.1 L385.9,967.1 L392.0,967.1 L398.1,967.1 L404.2,967.1 L410.3,967.1 L416.4,967.1 L422.5,967.1 L428.6,967.1 L434.7,967.1 L440.7,967.1 L446.8,967.1 L452.9,967.1 L459.0,967.1 L465.1,967.1 L471.2,967.1 L477.3,967.1 L483.4,967.1 L489.5,967.1 L495.6,967.1 L501.7,967.1 L507.8,921.7 L513.9,967.1 L520.0,967.1 L526.1,967.1 L532.2,967.1 L538.2,967.1 L544.3,967.1 L550.4,967.1 L556.5,967.1 L562.6,967.1 L568.7,967.1 L574.8,967.1 L580.9,967.1 L587.0,967.1 L593.1,967.1 L599.2,967.1 L605.3,967.1 L611.4,967.1 L617.5,967.1 L623.6,967.1 L629.7,967.1 L635.8,967.1 L641.8,967.1 L647.9,967.1 L654.0,939.3 L660.1,967.1 L666.2,967.1 L672.3,966.5 M806.4,962.3 L812.5,967.1 L818.6,967.1 L824.7,967.1 L830.8,967.1 L836.9,921.7 L843.0,967.1 L849.0,967.1 L855.1,967.1 L861.2,967.1 L867.3,967.1 L873.4,967.1 L879.5,967.1 L885.6,967.1 L891.7,967.1 L897.8,967.1 L903.9,967.1 L910.0,967.1 L916.1,967.1 L922.2,967.1 L928.3,967.1 L934.4,967.1 L940.5,967.1 L946.5,925.2 L952.6,967.1 L958.7,967.1 L964.8,967.1 L970.9,967.1 L977.0,967.1 L983.1,967.1 L989.2,967.1 L995.3,967.1 L1001.4,967.1 L1007.5,967.1 L1013.6,967.1 L1019.7,967.1 L1025.8,967.1 L1031.9,967.1 L1038.0,967.1 L1044.1,967.1 L1050.1,967.1 L1056.2,967.1 L1062.3,967.1 L1068.4,967.1 L1074.5,967.1 L1080.6,967.1 L1086.7,967.1 L1092.8,919.9 L1098.9,967.1 L1105.0,967.1 L1111.1,967.1 L1117.2,967.1 L1123.3,967.1 L1129.4,967.1 L1135.5,967.1 L1141.6,967.1 L1147.7,967.1 L1153.7,967.1 L1159.8,967.1 L1165.9,967.1 L1172.0,967.1 L1178.1,967.1 L1184.2,967.1 L1190.3,967.1 L1196.4,967.1 L1202.5,967.1 L1208.6,967.1 L1214.7,967.1 L1220.8,967.1 L1226.9,967.1 L1233.0,967.1 L1239.1,919.9 L1245.2,967.1 L1251.2,967.1 L1257.3,967.1 L1263.4,967.1 L1269.5,966.2 M1373.1,956.3 L1379.2,967.1 L1385.3,921.7 L1391.4,967.1 L1397.5,967.1 L1403.6,967.1 L1409.7,967.1 L1415.8,967.1 L1421.9,967.1 L1428.0,967.1 L1434.1,967.1 L1440.2,967.1 L1446.3,937.6 M1507.2,813.6 L1513.3,967.1 L1519.4,967.1 L1525.5,967.1 L1531.6,919.6 L1537.7,967.1 L1543.8,967.1 L1549.9,967.1 L1555.9,967.1 L1562.0,966.5 M1659.5,962.3 L1665.6,967.1 L1671.7,967.1 L1677.8,918.2 L1683.9,967.1 L1690.0,967.1 L1696.1,967.1 L1702.2,967.1 L1708.3,967.1 L1714.4,967.1 L1720.5,967.1 L1726.6,967.1 L1732.7,967.1 L1738.8,967.1 L1744.9,967.1 L1751.0,967.1 L1757.1,967.1 L1763.1,967.1 L1769.2,967.1 L1775.3,967.1 L1781.4,967.1 L1787.5,967.1 L1793.6,967.1 L1799.7,967.1 L1805.8,967.1 L1811.9,967.1 L1818.0,967.1 L1824.1,918.2 L1830.2,962.3" stroke="#167a78" stroke-width="2.2" fill="none" stroke-linejoin="round" stroke-linecap="round"/>
<path d="M1446.3,937.6 L1507.2,813.6 M1269.5,966.2 L1373.1,956.3 M1562.0,966.5 L1659.5,962.3 M672.3,966.5 L806.4,962.3" stroke="#167a78" stroke-width="2.2" stroke-dasharray="3.2 3.7" fill="none"/>
<path d="M81.2,967.6 L1830.2,967.6" stroke="#2a7a74" stroke-width="1.8" fill="none"/>
<path d="M81.2,966.2 L1830.2,966.2" stroke="#c4127a" stroke-width="1.8" stroke-dasharray="3.6 2.4" fill="none"/>
<path d="M517,961.8 L560,961.8" stroke="#1b7f86" stroke-width="1.8" stroke-dasharray="3.2 3.7" fill="none"/>
<path d="M757,963.2 L809,963.2" stroke="#1b7f86" stroke-width="1.8" stroke-dasharray="3.2 3.7" fill="none"/>
<path d="M1025,962.8 L1078,962.8" stroke="#1b7f86" stroke-width="1.8" stroke-dasharray="3.2 3.7" fill="none"/>
<path d="M1623,964.5 L1672,964.5" stroke="#1b7f86" stroke-width="1.8" stroke-dasharray="3.2 3.7" fill="none"/>
<path d="M806,958.6 L940,966.4" stroke="#1b7f86" stroke-width="1.8" stroke-dasharray="3.2 3.7" fill="none"/>
<clipPath id="plotclip"><rect x="40" y="200" width="1830" height="768.6"/></clipPath><g clip-path="url(#plotclip)">
<circle cx="751.5" cy="517.0" r="4.5" fill="#fff" stroke="#0078d4" stroke-width="2.6"/>
<circle cx="751.5" cy="626.5" r="4.5" fill="#fff" stroke="#ef6950" stroke-width="2.6"/>
<circle cx="751.5" cy="728.7" r="4.5" fill="#fff" stroke="#00a2ad" stroke-width="2.6"/>
<circle cx="751.5" cy="739.5" r="4.5" fill="#fff" stroke="#4b003f" stroke-width="2.6"/>
<circle cx="751.5" cy="779.0" r="4.5" fill="#fff" stroke="#e3008c" stroke-width="2.6"/>
<circle cx="751.5" cy="867.0" r="4.5" fill="#fff" stroke="#022f22" stroke-width="2.6"/>
<circle cx="751.5" cy="887.1" r="4.5" fill="#fff" stroke="#917edb" stroke-width="2.6"/>
<circle cx="751.5" cy="319.2" r="5.8" fill="#001d3f"/>
<circle cx="751.5" cy="942.2" r="5.6" fill="#502006"/>
<circle cx="751.5" cy="948.2" r="5.6" fill="#0b47a8"/>
<circle cx="751.5" cy="959.1" r="5.6" fill="#b4382c"/>
<circle cx="751.5" cy="961.6" r="5.6" fill="#6a72cc"/>
<circle cx="751.5" cy="964.4" r="5.6" fill="#8a8fa8"/>
<circle cx="751.5" cy="966.9" r="5.6" fill="#5f8f86"/>
</g>
<rect x="78.0" y="997" width="7" height="52.5" fill="#0078d4"/>
<rect x="207.3" y="997" width="7" height="52.5" fill="#ef6950"/>
<rect x="336.6" y="997" width="7" height="52.5" fill="#00188f"/>
<rect x="465.9" y="997" width="7" height="52.5" fill="#00a2ad"/>
<rect x="595.2" y="997" width="7" height="52.5" fill="#4b003f"/>
<rect x="724.5" y="997" width="7" height="52.5" fill="#e3008c"/>
<rect x="853.8" y="997" width="7" height="52.5" fill="#022f22"/>
<rect x="983.1" y="997" width="7" height="52.5" fill="#917edb"/>
<rect x="1112.4" y="997" width="7" height="52.5" fill="#001d3f"/>
<rect x="1241.7" y="997" width="7" height="52.5" fill="#502006"/>
<rect x="1371.0" y="997" width="7" height="52.5" fill="#0b47a8"/>
<rect x="1500.3" y="997" width="7" height="52.5" fill="#b4382c"/>
<rect x="1629.6" y="997" width="7" height="52.5" fill="#6a72cc"/>
</svg>
<svg class="i" style="left:4px;top:22px" width="18" height="18" viewBox="0 0 18 18"><path d="M9 1v16M1 9h16" stroke="#1a6fd1" stroke-width="1.4" fill="none"/></svg>
<svg class="i" style="left:104px;top:21px" width="20" height="20" viewBox="0 0 20 20"><path d="M9.2 2.6A8 8 0 1 0 15 4.6" stroke="#1a6fd1" stroke-width="1.4" fill="none"/><path d="M5.4 2.4h4.2v4.2" stroke="#1a6fd1" stroke-width="1.4" fill="none"/></svg>
<svg class="i" style="left:187px;top:22px" width="20" height="19" viewBox="0 0 20 19"><path d="M2.5 7v10h13v-2.5" stroke="#1a6fd1" stroke-width="1.4" fill="none"/><path d="M5.5 13c.6-4.2 3.3-6.4 7-6.4V3.2L18 8l-5.5 4.6V9.4c-3 0-5.4.8-7 3.6z" stroke="#1a6fd1" stroke-width="1.3" fill="none" stroke-linejoin="round"/></svg>
<svg class="i" style="left:253px;top:26.5px" width="18" height="11" viewBox="0 0 18 11"><path d="M1 1l8 8.5L17 1" stroke="#1a6fd1" stroke-width="1.5" fill="none"/></svg>
<svg class="i" style="left:373px;top:26.5px" width="18" height="11" viewBox="0 0 18 11"><path d="M1 1l8 8.5L17 1" stroke="#1a6fd1" stroke-width="1.5" fill="none"/></svg>
<svg class="i" style="left:284px;top:21.5px" width="19" height="19" viewBox="0 0 19 19"><circle cx="9.5" cy="9.5" r="8.6" stroke="#1a6fd1" stroke-width="1.3" fill="none"/><circle cx="6.6" cy="7.2" r="1.2" fill="#1a6fd1"/><circle cx="12.4" cy="7.2" r="1.2" fill="#1a6fd1"/><path d="M5.4 11.6a4.6 4.6 0 0 0 8.2 0" stroke="#1a6fd1" stroke-width="1.3" fill="none"/></svg>
<svg class="i" style="left:0;top:0" width="600" height="100" viewBox="0 0 600 100"><g transform="translate(546.2,85.6) rotate(-45)"><path d="M0 0 L5 -2.6 H22 a2.6 2.6 0 0 1 0 5.2 H5 Z M5 -2.6 V2.6 M19.6 -2.6 V2.6" stroke="#1a6fd1" stroke-width="1.35" fill="none" stroke-linejoin="round"/></g></svg>
<svg class="i" style="left:25px;top:110px" width="26" height="26" viewBox="0 0 26 26"><path d="M7 4.6v6M4 7.6h6" stroke="#9a98a2" stroke-width="1.3"/><path d="M5.5,18.1 L9.9,13.7 L13.7,16.9 L18.4,12.6" stroke="#b0aeb2" stroke-width="1.0" fill="none"/><circle cx="5.5" cy="18.1" r="1.25" fill="#9a98a2"/><circle cx="9.9" cy="13.7" r="1.25" fill="#9a98a2"/><circle cx="13.7" cy="16.9" r="1.25" fill="#9a98a2"/><circle cx="18.4" cy="12.6" r="1.25" fill="#9a98a2"/></svg>
<svg class="i" style="left:130px;top:110px" width="26" height="26" viewBox="0 0 26 26"><path d="M6.3 3.1v7M2.8 6.6h7" stroke="#0a3fe0" stroke-width="2"/><path d="M9.6 9.4h11.4a.6.6 0 0 1 .45 1l-4.1 5.2v5.6a.5.5 0 0 1 -.5.5h-2.9a.5.5 0 0 1 -.5-.5v-5.6L9.15 10.4a.6.6 0 0 1 .45-1z" fill="#0a3fe0"/></svg>
<svg class="i" style="left:225px;top:110px" width="26" height="26" viewBox="0 0 26 26"><path d="M7.3 3.8v6M4.3 6.8h6" stroke="#9a98a2" stroke-width="1.3"/><path d="M8.4,13.3 L12.3,8.6 L15.9,12.2 L19.9,8.3" stroke="#b4b2b6" stroke-width="0.9" fill="none"/><circle cx="8.4" cy="13.3" r="1.15" fill="#9a98a2"/><circle cx="12.3" cy="8.6" r="1.15" fill="#9a98a2"/><circle cx="15.9" cy="12.2" r="1.15" fill="#9a98a2"/><circle cx="19.9" cy="8.3" r="1.15" fill="#9a98a2"/><path d="M8.8,20.1 L12.7,15.8 L16.3,19.4 L20.6,14.7" stroke="#b4b2b6" stroke-width="0.9" fill="none"/><circle cx="8.8" cy="20.1" r="1.15" fill="#9a98a2"/><circle cx="12.7" cy="15.8" r="1.15" fill="#9a98a2"/><circle cx="16.3" cy="19.4" r="1.15" fill="#9a98a2"/><circle cx="20.6" cy="14.7" r="1.15" fill="#9a98a2"/></svg>
<svg class="i" style="left:1311px;top:112px" width="21" height="21" viewBox="0 0 21 21"><path d="M1.5 1v18.5H20" stroke="#1a6fd1" stroke-width="1.5" fill="none"/><path d="M4 11l4-4 3 2.5 3-3 5 2" stroke="#1a6fd1" stroke-width="1.2" fill="none"/><path d="M4 16l4-3.5 3 2 3-2.5 5 2" stroke="#1a6fd1" stroke-width="1.2" fill="none"/></svg>
<svg class="i" style="left:1403px;top:118.5px" width="18" height="11" viewBox="0 0 18 11"><path d="M1 1l8 8.5L17 1" stroke="#1a6fd1" stroke-width="1.5" fill="none"/></svg>
<svg class="i" style="left:1434px;top:112px" width="21" height="22" viewBox="0 0 21 22"><path d="M8 20H2V1.5h9l5 5V10" stroke="#a6a4a2" stroke-width="1.3" fill="none"/><path d="M11 1.5v5h5" stroke="#a6a4a2" stroke-width="1.3" fill="none"/><rect x="9" y="13" width="7" height="5" rx="2.5" stroke="#a6a4a2" stroke-width="1.2" fill="none"/><rect x="13" y="15" width="7" height="5" rx="2.5" stroke="#a6a4a2" stroke-width="1.2" fill="none"/></svg>
<svg class="i" style="left:1550px;top:118.5px" width="18" height="11" viewBox="0 0 18 11"><path d="M1 1l8 8.5L17 1" stroke="#a6a4a2" stroke-width="1.4" fill="none"/></svg>
<svg class="i" style="left:1581px;top:112px" width="20" height="21" viewBox="0 0 20 21"><path d="M3.5 1.6h13a2 2 0 0 1 2 2v8.6a2 2 0 0 1 -2 2h-3.2l-2.2 3.6-1.6-3.6H3.5a2 2 0 0 1 -2-2V3.6a2 2 0 0 1 2-2z" stroke="#1a6fd1" stroke-width="1.5" fill="none" stroke-linejoin="round"/><path d="M10 3.8v4.6" stroke="#1a6fd1" stroke-width="1.7"/><circle cx="10" cy="11" r="1.05" fill="#1a6fd1"/></svg>
<svg class="i" style="left:1704px;top:112px" width="21" height="21" viewBox="0 0 21 21"><path d="M12.5 1.5l7 7-2 .6-3.4 3.4.2 4-1.6 1.2-8.4-8.4 1.2-1.6 4 .2 3.4-3.4z" stroke="#1a6fd1" stroke-width="1.4" fill="none" stroke-linejoin="round"/><path d="M7.6 13.4L1.5 19.5" stroke="#1a6fd1" stroke-width="1.4"/></svg>
<svg class="i" style="left:1849px;top:121.6px" width="18" height="6" viewBox="0 0 18 6"><circle cx="2.5" cy="3" r="1.3" fill="#1a6fd1"/><circle cx="9" cy="3" r="1.3" fill="#1a6fd1"/><circle cx="15.5" cy="3" r="1.3" fill="#1a6fd1"/></svg>
<svg class="i" style="left:31px;top:164px" width="19" height="18" viewBox="0 0 19 18"><defs><linearGradient id="vmg" x1="0" y1="0" x2="0" y2="1"><stop offset="0" stop-color="#4a97ea"/><stop offset="1" stop-color="#0b6cd6"/></linearGradient></defs><rect x="0" y="0" width="18.8" height="12.9" rx="0.6" fill="url(#vmg)"/><path d="M9.4 2.6l3 1.7v3.6l-3 1.7-3-1.7V4.3z" fill="#bfe6fb"/><path d="M9.4 2.6l3 1.7-3 1.8-3-1.8z" fill="#e8f6fe"/><path d="M8 12.9h2.8l1.1 3.6H6.9z" fill="#8f8f8f"/><rect x="5" y="16.3" width="8.8" height="1.3" rx=".6" fill="#b5b5b5"/></svg>
<svg class="i" style="left:360px;top:160px" width="26" height="26" viewBox="0 0 26 26"><path d="M5.4,11.9 L10.4,6.7 L14.8,10.9 L20.0,5.8" stroke="#4f98ee" stroke-width="1.1" fill="none"/><circle cx="5.4" cy="11.9" r="1.75" fill="#0b4fdb"/><circle cx="10.4" cy="6.7" r="1.75" fill="#0b4fdb"/><circle cx="14.8" cy="10.9" r="1.75" fill="#0b4fdb"/><circle cx="20.0" cy="5.8" r="1.75" fill="#0b4fdb"/><path d="M5.9,20.4 L11.1,15.0 L15.5,19.2 L20.5,14.2" stroke="#4f98ee" stroke-width="1.1" fill="none"/><circle cx="5.9" cy="20.4" r="1.75" fill="#0b4fdb"/><circle cx="11.1" cy="15.0" r="1.75" fill="#0b4fdb"/><circle cx="15.5" cy="19.2" r="1.75" fill="#0b4fdb"/><circle cx="20.5" cy="14.2" r="1.75" fill="#0b4fdb"/></svg>
<svg class="i" style="left:320.2px;top:165.3px" width="15" height="15" viewBox="0 0 15 15"><circle cx="7.5" cy="7.5" r="7.2" fill="#4a4846"/><path d="M4.6 4.6l5.8 5.8M10.4 4.6l-5.8 5.8" stroke="#fff" stroke-width="1.5"/></svg>
<svg class="i" style="left:539.5px;top:165.3px" width="15" height="15" viewBox="0 0 15 15"><circle cx="7.5" cy="7.5" r="7.2" fill="#4a4846"/><path d="M4.6 4.6l5.8 5.8M10.4 4.6l-5.8 5.8" stroke="#fff" stroke-width="1.5"/></svg>
<svg class="i" style="left:-1px;top:586px" width="9" height="19" viewBox="0 0 9 19"><path d="M8 1L1 9.5 8 18" stroke="#1a6fd1" stroke-width="1.3" fill="none"/></svg>
<svg class="i" style="left:47px;top:1005px" width="14" height="9" viewBox="0 0 14 9"><path d="M1.5 7.5L7 2l5.5 5.5" stroke="#0f5fc8" stroke-width="2" fill="none"/></svg>
<svg class="i" style="left:47px;top:1045.5px" width="14" height="9" viewBox="0 0 14 9"><path d="M1.5 1.5L7 7l5.5-5.5" stroke="#0f5fc8" stroke-width="2" fill="none"/></svg>
<span class="t" style="left:29.0px;top:22.9px;font-size:14px;line-height:18.2px;color:#2b2a29;letter-spacing:-0.129px;">New chart</span>
<span class="t" style="left:130.0px;top:22.9px;font-size:14px;line-height:18.2px;color:#2b2a29;letter-spacing:-0.839px;">Refresh</span>
<span class="t" style="left:212.0px;top:22.9px;font-size:14px;line-height:18.2px;color:#2b2a29;letter-spacing:-0.840px;">Share</span>
<span class="t" style="left:309.0px;top:22.9px;font-size:14px;line-height:18.2px;color:#2b2a29;letter-spacing:-0.498px;">Feedback</span>
<span class="t" style="left:1537.0px;top:20.5px;font-size:15.5px;line-height:20.2px;color:#2b2a29;letter-spacing:-0.344px;">Local Time: Last 24 hours (Automatic - 5 minutes)</span>
<span class="t" style="left:26.0px;top:68.0px;font-size:16px;line-height:20.8px;color:#323130;letter-spacing:0.272px;-webkit-text-stroke:0.55px currentColor;">Avg Disk Write Bytes for undefined in undefined region by ResourceId</span>
<span class="t" style="left:52.0px;top:113.8px;font-size:14px;line-height:18.2px;color:#a6a4a2;letter-spacing:0.009px;">Add metric</span>
<span class="t" style="left:157.6px;top:113.8px;font-size:14px;line-height:18.2px;color:#2b2a29;letter-spacing:0.183px;">Add filter</span>
<span class="t" style="left:253.0px;top:113.8px;font-size:14px;line-height:18.2px;color:#a6a4a2;letter-spacing:0.115px;">Apply splitting</span>
<span class="t" style="left:1338.0px;top:113.8px;font-size:14px;line-height:18.2px;color:#2b2a29;letter-spacing:-0.276px;">Line chart</span>
<span class="t" style="left:1459.5px;top:113.8px;font-size:14px;line-height:18.2px;color:#a6a4a2;letter-spacing:-0.023px;">Drill into Logs</span>
<span class="t" style="left:1607.0px;top:113.8px;font-size:14px;line-height:18.2px;color:#2b2a29;letter-spacing:-0.106px;">New alert rule</span>
<span class="t" style="left:1731.0px;top:113.8px;font-size:14px;line-height:18.2px;color:#2b2a29;letter-spacing:-0.124px;">Pin to dashboard</span>
<span class="t" style="left:54.5px;top:163.2px;font-size:15px;line-height:19.5px;color:#323130;letter-spacing:-0.160px;">Contoso Hotels,</span>
<span class="t" style="left:162.0px;top:163.2px;font-size:15px;line-height:19.5px;color:#201f1e;letter-spacing:-0.205px;font-weight:700;">Disk Write Bytes,</span>
<span class="t" style="left:285.0px;top:163.2px;font-size:15px;line-height:19.5px;color:#323130;letter-spacing:-0.289px;">Avg</span>
<span class="t" style="left:388.0px;top:163.2px;font-size:15px;line-height:19.5px;color:#323130;letter-spacing:-0.100px;">Split by</span>
<span class="t" style="left:440.5px;top:163.2px;font-size:15px;line-height:19.5px;color:#323130;letter-spacing:0.000px;">=</span>
<span class="t" style="left:452.0px;top:163.2px;font-size:15px;line-height:19.5px;color:#201f1e;letter-spacing:-0.523px;font-weight:700;">ResourceId</span>
<span class="t" style="left:62.0px;top:955.0px;font-size:10.5px;line-height:13.7px;color:#6e6c6a;letter-spacing:0.156px;">0B</span>
<span class="t" style="left:45.0px;top:884.3px;font-size:10.5px;line-height:13.7px;color:#6e6c6a;letter-spacing:0.854px;">20MB</span>
<span class="t" style="left:45.0px;top:813.7px;font-size:10.5px;line-height:13.7px;color:#6e6c6a;letter-spacing:0.854px;">40MB</span>
<span class="t" style="left:45.0px;top:743.1px;font-size:10.5px;line-height:13.7px;color:#6e6c6a;letter-spacing:0.854px;">60MB</span>
<span class="t" style="left:45.0px;top:672.5px;font-size:10.5px;line-height:13.7px;color:#6e6c6a;letter-spacing:0.854px;">80MB</span>
<span class="t" style="left:39.0px;top:601.8px;font-size:10.5px;line-height:13.7px;color:#6e6c6a;letter-spacing:0.680px;">100MB</span>
<span class="t" style="left:39.0px;top:531.2px;font-size:10.5px;line-height:13.7px;color:#6e6c6a;letter-spacing:0.680px;">120MB</span>
<span class="t" style="left:39.0px;top:460.6px;font-size:10.5px;line-height:13.7px;color:#6e6c6a;letter-spacing:0.680px;">140MB</span>
<span class="t" style="left:39.0px;top:389.9px;font-size:10.5px;line-height:13.7px;color:#6e6c6a;letter-spacing:0.680px;">160MB</span>
<span class="t" style="left:39.0px;top:319.3px;font-size:10.5px;line-height:13.7px;color:#6e6c6a;letter-spacing:0.680px;">180MB</span>
<span class="t" style="left:39.0px;top:248.7px;font-size:10.5px;line-height:13.7px;color:#6e6c6a;letter-spacing:0.680px;">200MB</span>
<span class="t" style="left:164.5px;top:976.2px;font-size:10.5px;line-height:13.7px;color:#6e6c6a;letter-spacing:0.338px;">Tue 24</span>
<span class="t" style="left:607.5px;top:976.2px;font-size:10.5px;line-height:13.7px;color:#c8c6c4;letter-spacing:0.854px;">6 AM</span>
<span class="t" style="left:1043.5px;top:976.2px;font-size:10.5px;line-height:13.7px;color:#6e6c6a;letter-spacing:0.410px;">12 PM</span>
<span class="t" style="left:1484.5px;top:976.2px;font-size:10.5px;line-height:13.7px;color:#6e6c6a;letter-spacing:0.661px;">6 PM</span>
<span class="t" style="left:1810.5px;top:976.2px;font-size:10.5px;line-height:13.7px;color:#6e6c6a;letter-spacing:0.143px;">UTC-08:00</span>
<span class="t" style="left:713.0px;top:980.4px;font-size:11px;line-height:14.3px;color:#6e6c6a;letter-spacing:0.286px;">Nov 24 7:47 AM</span>
<span class="t" style="left:90.6px;top:999.1px;font-size:11px;line-height:14.3px;color:#201f1e;letter-spacing:-0.163px;">am-temp3869fa15</span>
<span class="t" style="left:90.6px;top:1011.9px;font-size:11px;line-height:14.3px;color:#323130;letter-spacing:-0.363px;">Contoso Hotels</span>
<span class="t" style="left:91.6px;top:1026.5px;font-size:22px;line-height:28.6px;color:#201f1e;letter-spacing:1.344px;">--</span>
<span class="t" style="left:219.9px;top:999.1px;font-size:11px;line-height:14.3px;color:#201f1e;letter-spacing:-0.239px;">am-temp6431e299</span>
<span class="t" style="left:219.9px;top:1011.9px;font-size:11px;line-height:14.3px;color:#323130;letter-spacing:-0.363px;">Contoso Hotels</span>
<span class="t" style="left:220.9px;top:1026.5px;font-size:22px;line-height:28.6px;color:#201f1e;letter-spacing:1.344px;">--</span>
<span class="t" style="left:349.2px;top:999.1px;font-size:11px;line-height:14.3px;color:#201f1e;letter-spacing:0.051px;">am-tempd938f48d</span>
<span class="t" style="left:349.2px;top:1011.9px;font-size:11px;line-height:14.3px;color:#323130;letter-spacing:-0.363px;">Contoso Hotels</span>
<span class="t" style="left:350.2px;top:1026.5px;font-size:22px;line-height:28.6px;color:#201f1e;letter-spacing:1.344px;">--</span>
<span class="t" style="left:478.5px;top:999.1px;font-size:11px;line-height:14.3px;color:#201f1e;letter-spacing:-0.191px;">am-temp81ec535f</span>
<span class="t" style="left:478.5px;top:1011.9px;font-size:11px;line-height:14.3px;color:#323130;letter-spacing:-0.363px;">Contoso Hotels</span>
<span class="t" style="left:479.5px;top:1026.5px;font-size:22px;line-height:28.6px;color:#201f1e;letter-spacing:1.344px;">--</span>
<span class="t" style="left:607.8px;top:999.1px;font-size:11px;line-height:14.3px;color:#201f1e;letter-spacing:-0.020px;">am-tempef285424</span>
<span class="t" style="left:607.8px;top:1011.9px;font-size:11px;line-height:14.3px;color:#323130;letter-spacing:-0.363px;">Contoso Hotels</span>
<span class="t" style="left:608.8px;top:1026.5px;font-size:22px;line-height:28.6px;color:#201f1e;letter-spacing:1.344px;">--</span>
<span class="t" style="left:737.1px;top:999.1px;font-size:11px;line-height:14.3px;color:#201f1e;letter-spacing:-0.267px;">am-temp99c17a86</span>
<span class="t" style="left:737.1px;top:1011.9px;font-size:11px;line-height:14.3px;color:#323130;letter-spacing:-0.363px;">Contoso Hotels</span>
<span class="t" style="left:738.1px;top:1026.5px;font-size:22px;line-height:28.6px;color:#201f1e;letter-spacing:1.344px;">--</span>
<span class="t" style="left:866.4px;top:999.1px;font-size:11px;line-height:14.3px;color:#201f1e;letter-spacing:-0.124px;">am-tempe45eab4c</span>
<span class="t" style="left:866.4px;top:1011.9px;font-size:11px;line-height:14.3px;color:#323130;letter-spacing:-0.363px;">Contoso Hotels</span>
<span class="t" style="left:867.4px;top:1026.5px;font-size:22px;line-height:28.6px;color:#201f1e;letter-spacing:1.344px;">--</span>
<span class="t" style="left:995.7px;top:999.1px;font-size:11px;line-height:14.3px;color:#201f1e;letter-spacing:-0.191px;">am-temp7f7c7961</span>
<span class="t" style="left:995.7px;top:1011.9px;font-size:11px;line-height:14.3px;color:#323130;letter-spacing:-0.363px;">Contoso Hotels</span>
<span class="t" style="left:996.7px;top:1026.5px;font-size:22px;line-height:28.6px;color:#201f1e;letter-spacing:1.344px;">--</span>
<span class="t" style="left:1125.0px;top:999.1px;font-size:11px;line-height:14.3px;color:#201f1e;letter-spacing:-0.545px;">CH-DCVM11</span>
<span class="t" style="left:1125.0px;top:1011.9px;font-size:11px;line-height:14.3px;color:#323130;letter-spacing:-0.363px;">Contoso Hotels</span>
<span class="t" style="left:1125.0px;top:1026.1px;font-size:22px;line-height:28.6px;color:#0b0b0b;letter-spacing:-1.266px;-webkit-text-stroke:0.3px currentColor;">183.6</span>
<span class="t" style="left:1178.5px;top:1037.0px;font-size:11px;line-height:14.3px;color:#323130;letter-spacing:0.000px;">MB</span>
<span class="t" style="left:1254.3px;top:999.1px;font-size:11px;line-height:14.3px;color:#201f1e;letter-spacing:-0.609px;">CH-SQLVM12</span>
<span class="t" style="left:1254.3px;top:1011.9px;font-size:11px;line-height:14.3px;color:#323130;letter-spacing:-0.363px;">Contoso Hotels</span>
<span class="t" style="left:1254.3px;top:1026.1px;font-size:22px;line-height:28.6px;color:#0b0b0b;letter-spacing:-1.297px;-webkit-text-stroke:0.3px currentColor;">7.2</span>
<span class="t" style="left:1285.8px;top:1037.0px;font-size:11px;line-height:14.3px;color:#323130;letter-spacing:0.000px;">MB</span>
<span class="t" style="left:1383.6px;top:999.1px;font-size:11px;line-height:14.3px;color:#201f1e;letter-spacing:-0.523px;">CH-DCVM10</span>
<span class="t" style="left:1383.6px;top:1011.9px;font-size:11px;line-height:14.3px;color:#323130;letter-spacing:-0.363px;">Contoso Hotels</span>
<span class="t" style="left:1383.6px;top:1026.1px;font-size:22px;line-height:28.6px;color:#0b0b0b;letter-spacing:-1.297px;-webkit-text-stroke:0.3px currentColor;">5.5</span>
<span class="t" style="left:1415.1px;top:1037.0px;font-size:11px;line-height:14.3px;color:#323130;letter-spacing:0.000px;">MB</span>
<span class="t" style="left:1512.9px;top:999.1px;font-size:11px;line-height:14.3px;color:#201f1e;letter-spacing:-0.449px;">CH-FWDEMOVM10</span>
<span class="t" style="left:1512.9px;top:1011.9px;font-size:11px;line-height:14.3px;color:#323130;letter-spacing:-0.363px;">Contoso Hotels</span>
<span class="t" style="left:1512.9px;top:1026.1px;font-size:22px;line-height:28.6px;color:#0b0b0b;letter-spacing:-1.297px;-webkit-text-stroke:0.3px currentColor;">2.4</span>
<span class="t" style="left:1544.4px;top:1037.0px;font-size:11px;line-height:14.3px;color:#323130;letter-spacing:0.000px;">MB</span>
<span class="t" style="left:1642.2px;top:999.1px;font-size:11px;line-height:14.3px;color:#201f1e;letter-spacing:-0.603px;">CH-JBOXVM10</span>
<span class="t" style="left:1642.2px;top:1011.9px;font-size:11px;line-height:14.3px;color:#323130;letter-spacing:-0.363px;">Contoso Hotels</span>
<span class="t" style="left:1642.2px;top:1026.1px;font-size:22px;line-height:28.6px;color:#0b0b0b;letter-spacing:-2.297px;-webkit-text-stroke:0.3px currentColor;">1.7</span>
<span class="t" style="left:1671.7px;top:1037.0px;font-size:11px;line-height:14.3px;color:#323130;letter-spacing:0.000px;">MB</span>
<span class="t" style="left:42.5px;top:1019.6px;font-size:14.5px;line-height:18.9px;color:#201f1e;letter-spacing:0.164px;">1/2</span>
</body></html>
